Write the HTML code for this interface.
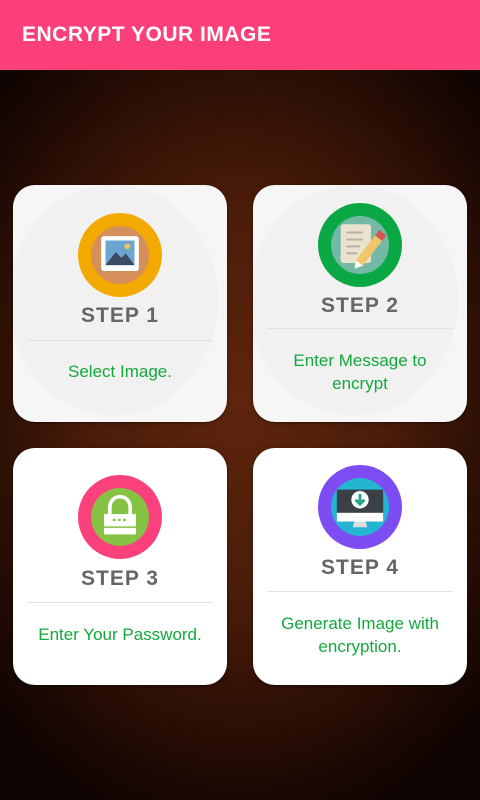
<!DOCTYPE html>
<html><head><meta charset="utf-8"><style>
*{margin:0;padding:0;box-sizing:border-box}
body{width:480px;height:800px;overflow:hidden;font-family:"Liberation Sans",sans-serif;
background:radial-gradient(ellipse 70% 55% at 50% 50%,#5e250d 0%,#4a1c09 45%,#250c04 80%,#100402 100%);position:relative}
.hdr{position:absolute;left:0;top:0;width:480px;height:70px;background:#fb4079;color:#fff;font-weight:bold;font-size:21px;line-height:70px;padding-left:22px;letter-spacing:0.5px}
.card{position:absolute;width:214px;height:237px;background:#fff;border-radius:22px;box-shadow:0 1px 3px rgba(0,0,0,.5);overflow:hidden}
.card.g{background:#f6f6f6}
.card.g:before{content:"";position:absolute;left:-5px;top:0;width:210px;height:230px;border-radius:50%;background:#f1f1f1}
.c{position:absolute;width:84px;height:84px;border-radius:50%;left:65px}
.c i{position:absolute;left:13px;top:13px;width:58px;height:58px;border-radius:50%;display:block}
.c svg{position:absolute;left:13px;top:13px}
.st{position:absolute;width:100%;text-align:center;color:#666;font-weight:bold;font-size:21px;letter-spacing:1px}
.ln{position:absolute;left:14px;right:14px;height:1px;background:#e0e0e0}
.tx{position:absolute;width:100%;text-align:center;color:#14a83c;font-size:17px;line-height:23px}
</style></head><body>
<div class="hdr">ENCRYPT YOUR IMAGE</div>

<div class="card g" style="left:13px;top:185px">
 <div class="c" style="top:28px;background:#f2a900"><i style="background:#d58f5a"></i>
  <svg width="58" height="58" viewBox="9 9 40 40"><rect x="16" y="16" width="26" height="24" rx="2" fill="#fff"/><rect x="19" y="19" width="20" height="17" fill="#6aa6cf"/><path d="M19 36 L26 27 L30 31 L33 28 L39 36Z" fill="#3e4a63"/><circle cx="34" cy="23" r="2" fill="#f2c15c"/></svg></div>
 <div class="st" style="top:119px">STEP 1</div>
 <div class="ln" style="top:155px"></div>
 <div class="tx" style="top:175px">Select Image.</div>
</div>

<div class="card g" style="left:253px;top:185px">
 <div class="c" style="top:18px;background:#0aa845"><i style="background:#72b9a6"></i>
  <svg width="58" height="58" viewBox="8 8 42 42"><rect x="15" y="14" width="22" height="28" rx="2" fill="#e8e2cf"/><path d="M19 20h12M19 25h12M19 30h10M19 35h8" stroke="#b9b3a1" stroke-width="1.5"/><path d="M26 40 L40 22 L45 26 L31 44 L25 46Z" fill="#f0c56b"/><path d="M40 22 L43 18 L48 22 L45 26Z" fill="#d9534f"/><path d="M26 40 L31 44 L25 46Z" fill="#fff"/></svg></div>
 <div class="st" style="top:109px">STEP 2</div>
 <div class="ln" style="top:143px"></div>
 <div class="tx" style="top:164px">Enter Message to<br>encrypt</div>
</div>

<div class="card" style="left:13px;top:448px">
 <div class="c" style="top:27px;background:#fb417b"><i style="background:#86c344"></i>
  <svg width="58" height="58" viewBox="9 9 40 40"><path d="M22 27 V22 a7 7 0 0 1 14 0 V27" fill="none" stroke="#fff" stroke-width="2.5"/><rect x="18" y="27" width="22" height="14" fill="#fff"/><path d="M18 36h22" stroke="#86c344" stroke-width="1"/><path d="M24 31h10" stroke="#86c344" stroke-width="1.5" stroke-dasharray="2 1.5"/></svg></div>
 <div class="st" style="top:119px">STEP 3</div>
 <div class="ln" style="top:154px"></div>
 <div class="tx" style="top:175px">Enter Your Password.</div>
</div>

<div class="card" style="left:253px;top:448px">
 <div class="c" style="top:17px;background:#7d4cf2"><i style="background:#26b5d1"></i>
  <svg width="58" height="58" viewBox="9 9 40 40"><rect x="13" y="17" width="32" height="22" rx="1" fill="#3b3f46"/><rect x="13" y="33" width="32" height="6" fill="#fff"/><path d="M25 39h8l1 4h-10z" fill="#ddd"/><circle cx="29" cy="24" r="6" fill="#fff"/><path d="M29 20v6M26 24l3 3 3-3" stroke="#1ea58a" stroke-width="2" fill="none"/></svg></div>
 <div class="st" style="top:108px">STEP 4</div>
 <div class="ln" style="top:143px"></div>
 <div class="tx" style="top:164px">Generate Image with<br>encryption.</div>
</div>
</body></html>
